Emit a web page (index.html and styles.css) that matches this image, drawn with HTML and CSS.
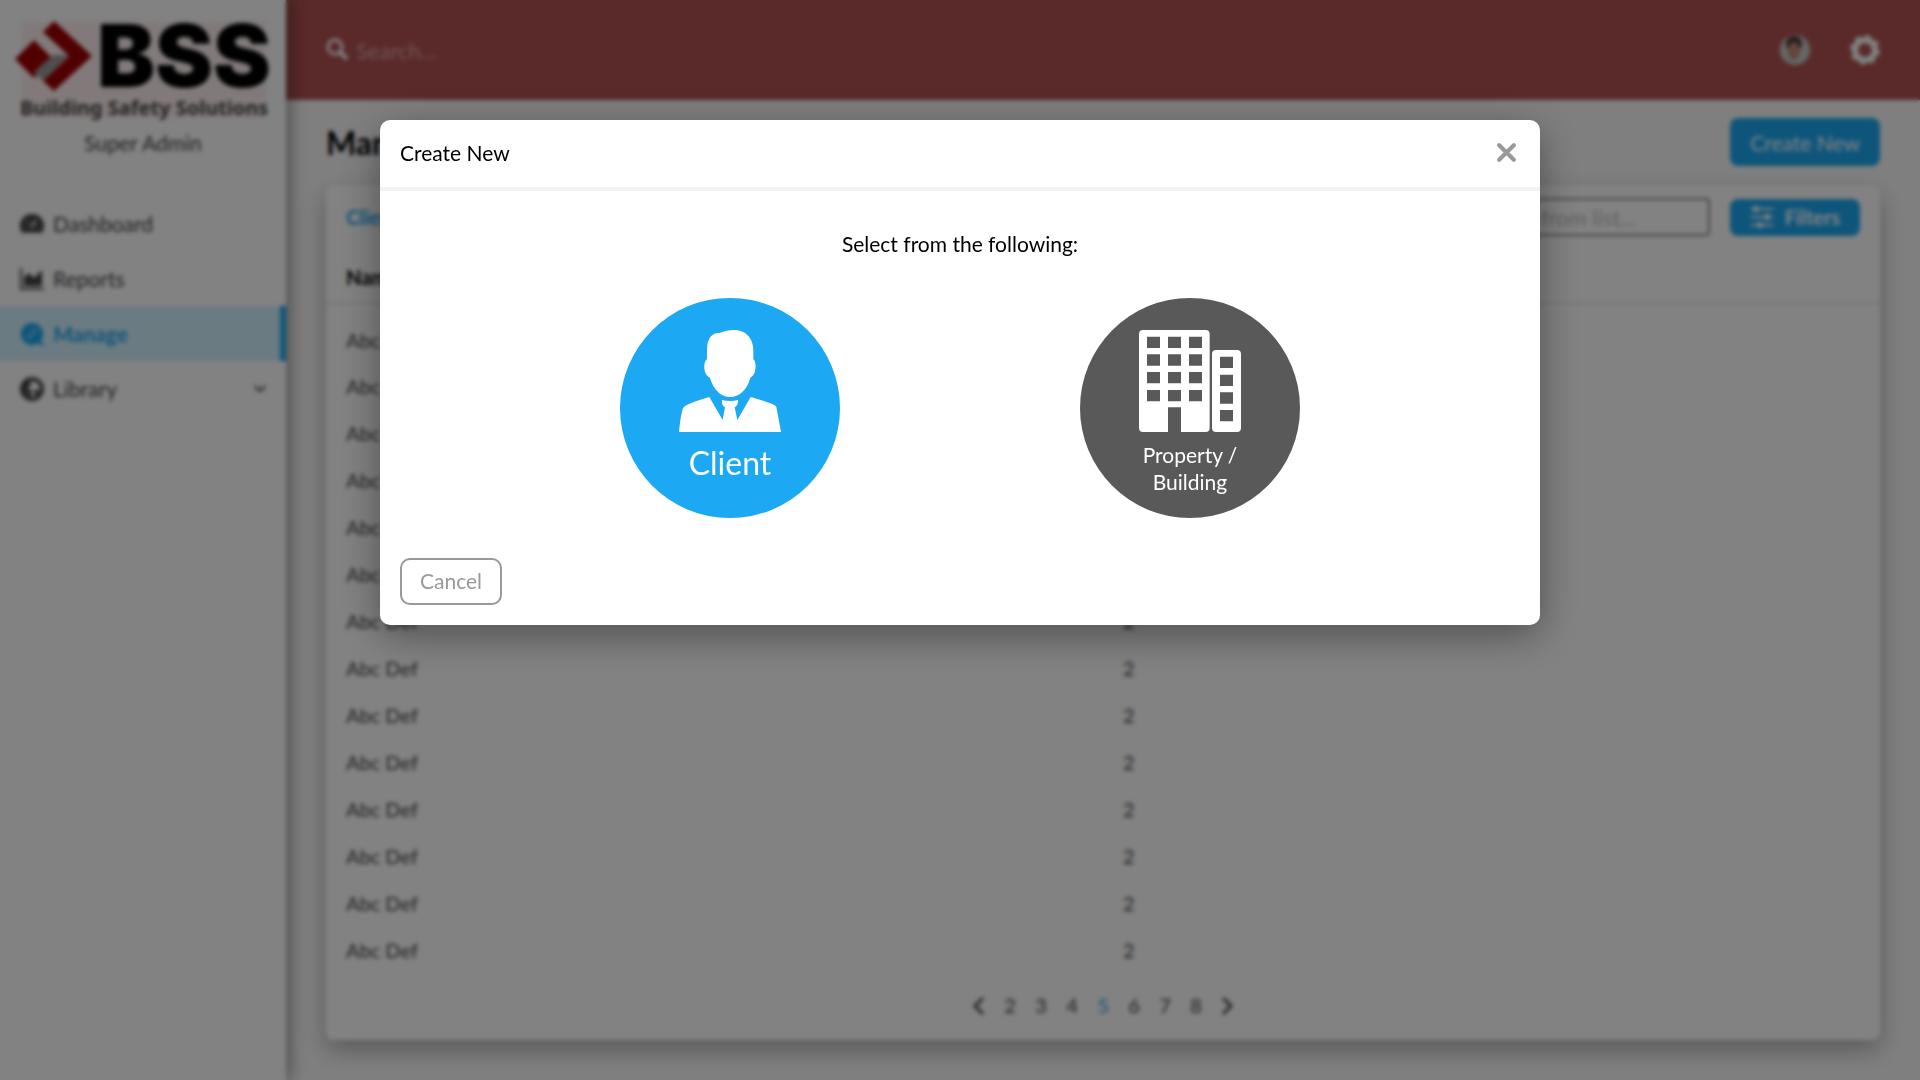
FILE: index.html
```html
<!DOCTYPE html>
<html lang="en">
<head>
    <meta charset="UTF-8">
    <meta name="viewport" content="width=device-width, initial-scale=1.0">
    <title>Manage - Building Safety Solutions</title>
    <link rel="stylesheet" href="styles.css">
</head>
<body>
    <div class="app">
        <aside class="sidebar">
            <svg class="logo" viewBox="0 0 258 104" role="img" aria-label="BSS Building Safety Solutions">
                <rect x="6" y="4" width="245" height="96" fill="#fff0f0"/>
                <path d="M19 22 L38 41 L19 60 L0 41 Z" fill="#a00000"/>
                <path d="M38 37 L54 37 L28 63 L19 54 Z" fill="#999"/>
                <path d="M39 3 L77 38 L39 73 L28 63 L54 38 L28 14 Z" fill="#a00000"/>
                <text x="82" y="69" class="logo-name">BSS</text>
                <text x="5" y="97" class="logo-tagline">Building Safety Solutions</text>
            </svg>
            <p class="role">Super Admin</p>
            <nav>
                <a href="#" class="nav-item">
                    <svg class="nav-icon" viewBox="0 0 24 24"><path d="M12 2a12 12 0 0 0-10.500 18q.4.800 1.500.800h18q1.100 0 1.500-.800A12 12 0 0 0 12 2z" fill="currentColor"/><path d="M11 16l5-8M5 15h1M7 9l1 1M19 15h-1" stroke="#fff" stroke-width="2"/></svg>
                    Dashboard
                </a>
                <a href="#" class="nav-item">
                    <svg class="nav-icon" viewBox="0 0 24 24"><path d="M1 1v21h23" fill="none" stroke="currentColor" stroke-width="2"/><path d="M4 19V10l5-4 5 5 8-8v16z" fill="currentColor"/></svg>
                    Reports
                </a>
                <a href="#" class="nav-item active">
                    <svg class="nav-icon" viewBox="0 0 24 24"><circle cx="12" cy="12" r="11" fill="currentColor"/><path d="M17 17l6 6" stroke="currentColor" stroke-width="3"/><path d="M8 16l1-4 6-5 2 2-6 6z" fill="none" stroke="#d2f1ff" stroke-width="1"/></svg>
                    Manage
                </a>
                <a href="#" class="nav-item">
                    <svg class="nav-icon" viewBox="0 0 24 24"><circle cx="12" cy="12" r="10" fill="none" stroke="currentColor" stroke-width="4"/><path d="M4 5h8l-4 7 4 2-1 7-8-7zM13 13h7l-4 7z" fill="currentColor"/></svg>
                    Library
                    <svg class="chevron" viewBox="0 0 12 8"><path d="M1 1l5 5 5-5" fill="none" stroke="currentColor" stroke-width="2"/></svg>
                </a>
            </nav>
        </aside>

        <div class="content">
            <header class="topbar">
                <svg class="search-icon" viewBox="0 0 24 24"><circle cx="9" cy="9" r="7" fill="none" stroke="currentColor" stroke-width="3"/><path d="M14 14l7 7" stroke="currentColor" stroke-width="4"/></svg>
                <input type="text" class="top-search" placeholder="Search..." aria-label="Search">
                <svg class="avatar" viewBox="0 0 30 30"><circle cx="15" cy="15" r="15" fill="#c8ccc8"/><ellipse cx="14" cy="9" rx="8" ry="8" fill="#4a3430"/><ellipse cx="14" cy="16" rx="6" ry="9" fill="#c08a74"/></svg>
                <svg class="gear" viewBox="0 0 30 30"><circle cx="15" cy="15" r="10" fill="none" stroke="currentColor" stroke-width="6"/><circle cx="15" cy="15" r="13" fill="none" stroke="currentColor" stroke-width="4" stroke-dasharray="5 5.200"/></svg>
            </header>

            <main>
                <div class="page-head">
                    <h1>Manage</h1>
                    <button class="btn btn-create">Create New</button>
                </div>

                <section class="card">
                    <div class="toolbar">
                        <a href="#" class="tab">Clients</a>
                        <input type="text" class="list-search" placeholder="Search from list..." aria-label="Search from list">
                        <button class="btn btn-filters">
                            <svg class="filter-icon" viewBox="0 0 24 24"><path d="M1 4h22M1 12h22M1 20h22" stroke="currentColor" stroke-width="2"/><circle cx="6" cy="4" r="3" fill="currentColor"/><circle cx="17" cy="12" r="3" fill="currentColor"/><circle cx="10" cy="20" r="3" fill="currentColor"/></svg>
                            Filters
                        </button>
                    </div>
                    <table>
                        <thead>
                            <tr><th>Name</th><th>Properties</th></tr>
                        </thead>
                        <tbody>
                            <tr><td>Abc Def</td><td>2</td></tr>
                            <tr><td>Abc Def</td><td>2</td></tr>
                            <tr><td>Abc Def</td><td>2</td></tr>
                            <tr><td>Abc Def</td><td>2</td></tr>
                            <tr><td>Abc Def</td><td>2</td></tr>
                            <tr><td>Abc Def</td><td>2</td></tr>
                            <tr><td>Abc Def</td><td>2</td></tr>
                            <tr><td>Abc Def</td><td>2</td></tr>
                            <tr><td>Abc Def</td><td>2</td></tr>
                            <tr><td>Abc Def</td><td>2</td></tr>
                            <tr><td>Abc Def</td><td>2</td></tr>
                            <tr><td>Abc Def</td><td>2</td></tr>
                            <tr><td>Abc Def</td><td>2</td></tr>
                            <tr><td>Abc Def</td><td>2</td></tr>
                        </tbody>
                    </table>
                    <nav class="pagination" aria-label="Pages">
                        <a href="#" aria-label="Previous"><svg viewBox="0 0 12 20"><path d="M10 2l-8 8 8 8" fill="none" stroke="currentColor" stroke-width="3"/></svg></a>
                        <a href="#">2</a>
                        <a href="#">3</a>
                        <a href="#">4</a>
                        <a href="#" class="current">5</a>
                        <a href="#">6</a>
                        <a href="#">7</a>
                        <a href="#">8</a>
                        <a href="#" aria-label="Next"><svg viewBox="0 0 12 20"><path d="M2 2l8 8-8 8" fill="none" stroke="currentColor" stroke-width="3"/></svg></a>
                    </nav>
                </section>
            </main>
        </div>
    </div>

    <div class="overlay">
        <div class="modal" role="dialog" aria-modal="true" aria-labelledby="modal-title">
            <div class="modal-header">
                <h2 id="modal-title">Create New</h2>
                <button class="close" aria-label="Close">
                    <svg viewBox="0 0 20 20"><path d="M3 3l14 14M17 3L3 17" stroke="currentColor" stroke-width="4" stroke-linecap="round"/></svg>
                </button>
            </div>
            <div class="modal-body">
                <p>Select from the following:</p>
                <div class="choices">
                    <button class="choice client">
                        <svg viewBox="0 0 306 306">
                            <path d="M84 88V60C84 25 98 8 122 9C135 3 150 0 165 0C205 0 223 30 223 60V88C233 95 234 135 214 143C205 180 180 201 153 201C127 201 103 180 93 143C72 135 72 95 84 88Z" fill="currentColor"/>
                            <path d="M0 306C3 275 7 250 12 235C14 226 50 212 91 201L131 270L138 232C130 228 128 218 129 210Q153 216 177 210C178 218 175 228 167 232L175 270L215 201C250 212 288 222 292 230L306 306Z" fill="currentColor"/>
                        </svg>
                        <span>Client</span>
                    </button>
                    <button class="choice property">
                        <svg viewBox="0 0 306 306">
                            <path fill="currentColor" fill-rule="evenodd" d="M12 0H200Q212 0 212 12V294Q212 306 200 306H126V232H87V306H12Q0 306 0 294V12Q0 0 12 0Z
                                M24 20h39v34h-39z M87 20h39v34h-39z M150 20h39v34h-39z
                                M24 73h39v34h-39z M87 73h39v34h-39z M150 73h39v34h-39z
                                M24 126h39v34h-39z M87 126h39v34h-39z M150 126h39v34h-39z
                                M24 180h39v34h-39z M87 180h39v34h-39z M150 180h39v34h-39z
                                M231 60H294Q306 60 306 72V294Q306 306 294 306H231Q219 306 219 294V72Q219 60 231 60Z
                                M243 80h39v34h-39z M243 134h39v34h-39z M243 187h39v34h-39z M243 240h39v34h-39z"/>
                        </svg>
                        <span>Property /<br>Building</span>
                    </button>
                </div>
            </div>
            <div class="modal-footer">
                <button class="cancel">Cancel</button>
            </div>
        </div>
    </div>
</body>
</html>
```
FILE: styles.css
```css
* {
    box-sizing: border-box;
}
body {
    margin: 0;
    font-family: Lato, sans-serif;
    font-size: 20px;
    line-height: 27px;
    color: #444;
    background: #fff;
}
h1, h2, p {
    margin: 0;
}
a {
    color: inherit;
    text-decoration: none;
}
button, input {
    font: inherit;
}
button {
    border: none;
    cursor: pointer;
}

/* Page behind the modal */
.app {
    display: flex;
    min-height: 100vh;
    background: #fafafa;
}
.sidebar {
    width: 286px;
    flex-shrink: 0;
    background: #fff;
    box-shadow: 4px 0 16px rgba(0,0,0,0.4);
    z-index: 1;
    font-size: 21px;
}
.logo {
    display: block;
    width: 258px;
    height: 104px;
    margin: 18px 0 7px 15px;
    overflow: visible;
}
.logo-name {
    font-family: Inter, sans-serif;
    font-size: 87px;
    font-weight: 900;
    fill: #000;
}
.logo-tagline {
    font-family: "Noto Sans", sans-serif;
    font-size: 20px;
    font-weight: 700;
    fill: #444;
}
.role {
    text-align: center;
    margin-bottom: 40px;
}
.nav-item {
    display: flex;
    align-items: center;
    gap: 9px;
    height: 55px;
    padding: 0 20px;
}
.nav-item.active {
    background: #d2f1ff;
    color: #1ca8f2;
    font-weight: 700;
    border-right: 6px solid #1ca8f2;
}
.nav-icon {
    width: 24px;
    height: 24px;
}
.chevron {
    width: 12px;
    height: 8px;
    margin-left: auto;
}
.content {
    flex: 1;
    min-width: 0;
}
.topbar {
    display: flex;
    align-items: center;
    height: 100px;
    padding: 0 40px;
    background: #b05252;
    color: #fff;
}
.search-icon {
    width: 24px;
    height: 24px;
}
.top-search {
    flex: 1;
    border: none;
    background: none;
    padding: 0 6px;
    color: #fff;
    font-size: 22px;
}
.top-search::placeholder {
    color: #d8a8a8;
}
.avatar, .gear {
    width: 30px;
    height: 30px;
}
.gear {
    margin-left: 40px;
}
main {
    padding: 18px 40px 40px;
}
.page-head {
    display: flex;
    justify-content: space-between;
    align-items: center;
    margin-bottom: 19px;
}
h1 {
    font-size: 32px;
    color: #000;
}
.btn {
    display: flex;
    align-items: center;
    gap: 10px;
    padding: 0 20px;
    border-radius: 8px;
    background: #1ca8f2;
    color: #fff;
}
.btn-create {
    height: 48px;
    font-size: 21px;
}
.btn-filters {
    height: 37px;
    font-weight: 700;
}
.filter-icon {
    width: 24px;
    height: 24px;
}
.card {
    background: #fff;
    border-radius: 8px;
    box-shadow: 0 10px 24px rgba(0,0,0,0.3);
}
.toolbar {
    display: flex;
    align-items: center;
    gap: 20px;
    padding: 13px 20px 17px;
}
.tab {
    margin-right: auto;
    color: #1ca8f2;
    font-weight: 700;
}
.list-search {
    width: 260px;
    height: 38px;
    padding: 0 18px;
    border: 2px solid #888;
    border-radius: 4px;
    font-size: 22px;
}
.list-search::placeholder {
    color: #bbb;
}
table {
    width: 100%;
    table-layout: fixed;
    border-collapse: collapse;
}
th, td {
    height: 47px;
    padding: 0 20px;
    text-align: left;
}
th {
    height: 50px;
    color: #000;
    border-bottom: 2px solid #e8e8e8;
}
tbody tr:first-child td {
    height: 60px;
    padding-top: 13px;
}
.pagination {
    display: flex;
    justify-content: center;
    gap: 11px;
    padding: 18px 0 21px;
}
.pagination a {
    display: flex;
    align-items: center;
    justify-content: center;
    width: 20px;
    height: 27px;
}
.pagination svg {
    width: 12px;
    height: 20px;
}
.pagination .current {
    color: #1ca8f2;
}

/* Modal */
.overlay {
    position: fixed;
    inset: 0;
    padding: 120px 20px 0;
    background: rgba(0,0,0,0.49);
    backdrop-filter: blur(2px);
    z-index: 10;
}
.modal {
    max-width: 1160px;
    margin: 0 auto;
    background: #fff;
    border-radius: 10px;
    box-shadow: 0 10px 40px rgba(0,0,0,0.4);
    color: #000;
}
.modal-header {
    display: flex;
    justify-content: space-between;
    align-items: center;
    padding: 19px 20px 21px;
    border-bottom: 4px solid #f2f2f2;
}
.modal-header h2 {
    font-size: 21px;
    font-weight: 400;
}
.close {
    display: flex;
    padding: 3px;
    background: none;
    color: #999;
}
.close svg {
    width: 21px;
    height: 21px;
}
.modal-body {
    padding: 39px 20px 40px;
    text-align: center;
}
.modal-body p {
    font-size: 21px;
    margin-bottom: 41px;
}
.choices {
    display: flex;
    justify-content: center;
    gap: 240px;
}
.choice {
    display: flex;
    flex-direction: column;
    align-items: center;
    width: 220px;
    height: 220px;
    padding: 32px 0 0;
    border-radius: 50%;
    color: #fff;
}
.choice svg {
    width: 102px;
    height: 102px;
    margin-bottom: 9px;
}
.client {
    background: #1ca8f2;
    font-size: 32px;
    line-height: 44px;
}
.property {
    background: #595959;
    font-size: 21px;
}
.modal-footer {
    padding: 0 20px 20px;
}
.cancel {
    height: 47px;
    padding: 0 18px 2px;
    border: 2px solid #999;
    border-radius: 10px;
    background: #fff;
    color: #999;
    font-size: 21px;
}
```
